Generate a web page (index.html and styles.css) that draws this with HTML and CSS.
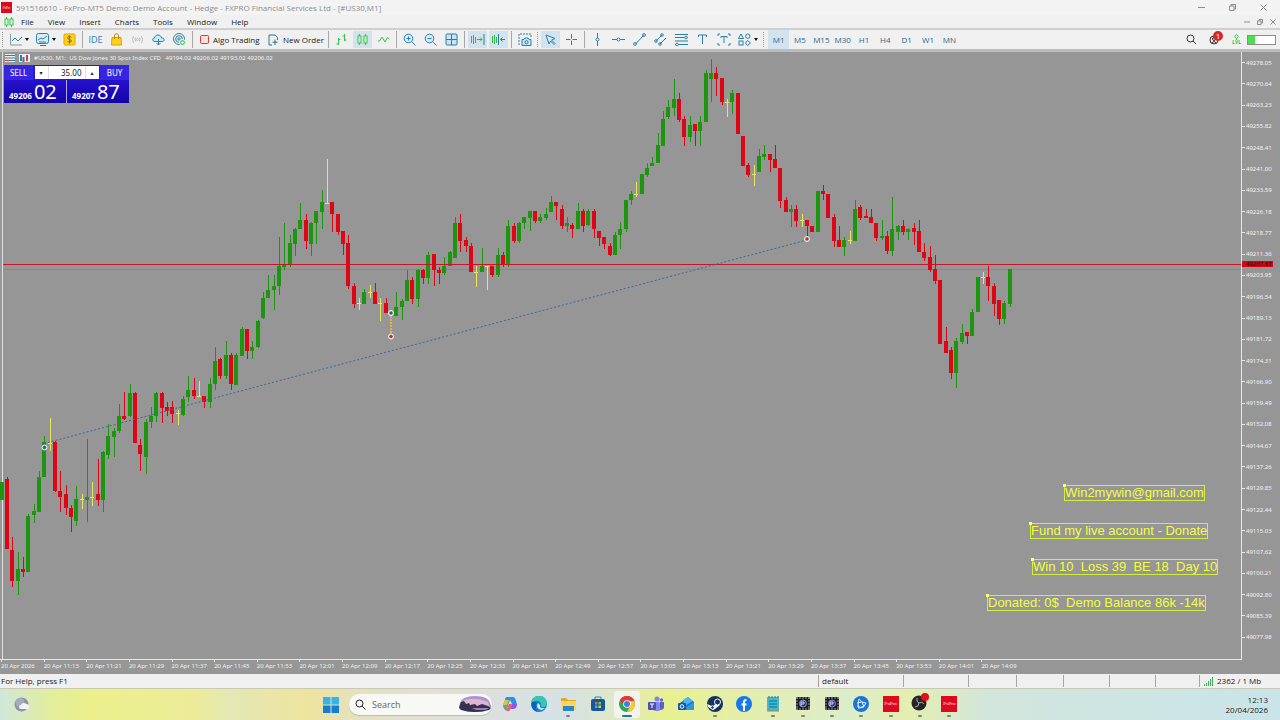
FILE: index.html
```html
<!DOCTYPE html>
<html lang="en">
<head>
    <meta charset="UTF-8">
    <meta name="viewport" content="width=device-width, initial-scale=1.0">
    <title>FxPro-MT5 Demo - [#US30,M1]</title>
    <link rel="stylesheet" href="styles.css">
</head>
<body>
    <header class="titlebar">
        <span class="fx-logo">FxPro</span>
        <h1>591516610 - FxPro-MT5 Demo: Demo Account - Hedge - FXPRO Financial Services Ltd - [#US30,M1]</h1>
        <div class="window-buttons">
            <button aria-label="Minimize"><svg width="7" height="7"><path d="M0 3.5h7"/></svg></button>
            <button aria-label="Restore"><svg width="7" height="7"><path d="M.5 2h4.500v4.500h-4.500zM2 2v-1.500h4.500v4.500h-1.500"/></svg></button>
            <button aria-label="Close"><svg width="7" height="7"><path d="M.5.5l6 6M6.500.5l-6 6"/></svg></button>
        </div>
    </header>

    <nav class="menubar">
        <svg class="menu-icon" width="10" height="10"><path d="M2.500 0v10M7.500 0v10"/><rect x="1" y="2" width="3" height="6"/><rect x="6" y="2" width="3" height="6"/></svg>
        <a href="#">File</a>
        <a href="#">View</a>
        <a href="#">Insert</a>
        <a href="#">Charts</a>
        <a href="#">Tools</a>
        <a href="#">Window</a>
        <a href="#">Help</a>
        <div class="window-buttons small">
            <button aria-label="Minimize chart"><svg width="6" height="6"><path d="M0 3h6"/></svg></button>
            <button aria-label="Restore chart"><svg width="6" height="6"><path d="M.5 2h3.500v3.500h-3.500zM2 2v-1.500h3.500v3.500h-1.500"/></svg></button>
            <button aria-label="Close chart"><svg width="6" height="6"><path d="M.5.5l5 5M5.500.5l-5 5"/></svg></button>
        </div>
    </nav>

    <div class="toolbar">
        <span class="grip"></span>
        <button class="tool drop" aria-label="Chart type"><svg width="13" height="13"><path d="M1.500 1v11H13" stroke="#8a979f"/><path d="M3 8l3-3 3 3 4-4"/></svg></button>
        <button class="tool drop" aria-label="Indicators"><svg width="13" height="13"><rect x=".5" y=".5" width="12" height="10" rx="2" fill="#d8edf6"/><path d="M2 7l3-2 2 1 4-3M4 12.500h6M3 9h7"/></svg></button>
        <button class="tool" aria-label="Symbols"><svg width="13" height="13"><rect x="1" y="1" width="11" height="11" rx="1" fill="#ffd21c" stroke="#dca800"/><path d="M8.500 4.500c-.5-1.500-4-1.500-4 .2 0 2 4 1.300 4 3.300 0 1.500-3.500 1.500-4 0M6.500 2.500v8" stroke="#8f6b00"/></svg></button>
        <span class="sep"></span>
        <button class="tool ide">IDE</button>
        <button class="tool" aria-label="Market"><svg width="13" height="13"><path d="M2 4.500h9l.5 7.500h-10z" fill="#ffcf1c" stroke="#d9a400"/><path d="M4.500 6V3c0-3 4-3 4 0v3" stroke="#b58900"/></svg></button>
        <button class="tool" aria-label="Signals"><svg width="13" height="13"><g stroke="#b9bcbe"><path d="M2.500 3q-2 3.500 0 7M4.500 4.500q-1 2 0 4M10.500 3q2 3.500 0 7M8.500 4.500q1 2 0 4"/><circle cx="6.500" cy="6.500" r="1"/></g></svg></button>
        <button class="tool" aria-label="Cloud"><svg width="13" height="13"><path d="M3 8.500c-3 0-3-3.500-.5-3.500.5-4 6.500-4 7 0 3.500 0 3.500 3.500.5 3.500z" fill="#cdeafa"/><path d="M6.500 6v6M4.500 10l2 2 2-2"/></svg></button>
        <button class="tool" aria-label="Network"><svg width="13" height="13"><circle cx="6" cy="6" r="5.500"/><circle cx="6" cy="6" r="3.300"/><circle cx="6" cy="6" r="1.200"/><circle cx="9.500" cy="9.500" r="3" fill="#4fce60" stroke="#fff"/><path d="M8 9.500h3M9.500 8v3" stroke="#fff"/></svg></button>
        <span class="sep"></span>
        <button class="tool text algo"><svg width="9" height="9"><rect x=".5" y=".5" width="8" height="8" rx="1" fill="#fbdcdc" stroke="#c9413f"/></svg>Algo Trading</button>
        <button class="tool text order"><svg width="11" height="12"><path d="M1 1h6l2.500 2.500V6M1 1v10h3" stroke="#28748e"/><path d="M7 5.500v5.500M4.500 8.200h5" stroke="#28748e"/></svg>New Order</button>
        <span class="sep"></span>
        <button class="tool green" aria-label="Bars"><svg width="13" height="13"><path d="M3.500 5v7M1.500 11h2M3.500 6.500h2M9.500 1v7M7.500 3h2M9.500 7h2"/></svg></button>
        <button class="tool green active" aria-label="Candles"><svg width="13" height="13"><path d="M3.500 1v11M9.500 1v11"/><rect x="2" y="3" width="3" height="7" fill="#dcf5df"/><rect x="8" y="3" width="3" height="7" fill="#dcf5df"/></svg></button>
        <button class="tool green" aria-label="Line"><svg width="13" height="13"><path d="M1 8h1.500l2.500-4 3 5 2.500-4.500 2 1.500"/></svg></button>
        <span class="sep"></span>
        <button class="tool" aria-label="Zoom in"><svg width="13" height="13"><circle cx="5.500" cy="5.500" r="4.300" fill="#d6ecf7"/><path d="M8.500 8.500l4 4M3.500 5.500h4M5.500 3.500v4"/></svg></button>
        <button class="tool" aria-label="Zoom out"><svg width="13" height="13"><circle cx="5.500" cy="5.500" r="4.300" fill="#d6ecf7"/><path d="M8.500 8.500l4 4M3.500 5.500h4"/></svg></button>
        <button class="tool" aria-label="Tile windows"><svg width="13" height="13"><rect x="1" y="1" width="11" height="11" rx="1" fill="#c7e5f4"/><path d="M6.500 1v11M1 6.500h11"/></svg></button>
        <span class="sep"></span>
        <button class="tool active" aria-label="Auto scroll"><svg width="15" height="13"><path d="M1.500 3v7M3.500 2v9M5.500 4v6M7 6.500h5M10 4.500l2 2-2 2" stroke="#3bb54a"/><path d="M14 1v11"/></svg></button>
        <button class="tool active" aria-label="Chart shift"><svg width="15" height="13"><path d="M1.500 3v7M3.500 2v9M5.500 4v6" stroke="#3bb54a"/><path d="M7.500 1v11M14 6.500H9.500M11.500 4.500l-2 2 2 2"/></svg></button>
        <span class="sep"></span>
        <button class="tool" aria-label="Screenshot"><svg width="14" height="13"><path d="M1 12V1h12v4" stroke-dasharray="2 1"/><path d="M4 6.500h2l1-1.500h3l1 1.500h2v6H4z" fill="#c7e5f4"/><circle cx="8.500" cy="9.200" r="1.600"/></svg></button>
        <span class="grip"></span>
        <button class="tool active" aria-label="Cursor"><svg width="13" height="13"><path d="M2 2l9 3.500-3.500 1.500 3.500 3.500-1 1-3.500-3.500L5 11z" fill="#d6ecf7"/></svg></button>
        <button class="tool" aria-label="Crosshair"><svg width="13" height="13"><path d="M6.500 1v4.500M6.500 7.500V12M1 6.500h4.500M7.500 6.500H12"/></svg></button>
        <span class="sep"></span>
        <button class="tool" aria-label="Vertical line"><svg width="13" height="13"><path d="M6.500 0v5M6.500 8v5"/><circle cx="6.500" cy="6.500" r="1.500"/></svg></button>
        <button class="tool" aria-label="Horizontal line"><svg width="13" height="13"><path d="M0 6.500h5M8 6.500h5"/><circle cx="6.500" cy="6.500" r="1.500"/></svg></button>
        <button class="tool" aria-label="Trendline"><svg width="13" height="13"><path d="M3 10.500l7.500-8"/><circle cx="2" cy="11" r="1.400"/><circle cx="11" cy="2" r="1.400"/></svg></button>
        <button class="tool" aria-label="Channel"><svg width="13" height="13"><path d="M2 8l6-6M6 11l6-6"/><circle cx="2" cy="8" r="1.300"/><circle cx="8" cy="2" r="1.300"/><circle cx="6" cy="11" r="1.300"/></svg></button>
        <button class="tool" aria-label="Fibonacci"><svg width="13" height="13"><path d="M0 1.500h13M0 4.500h13M0 8h13M0 11.500h13"/><circle cx="11" cy="4.500" r="1.300" fill="#fff"/><circle cx="2" cy="11.500" r="1.300" fill="#fff"/></svg></button>
        <button class="tool" aria-label="Text"><svg width="13" height="13"><path d="M2.500 4V2h8v2M6.500 2v9"/></svg></button>
        <button class="tool" aria-label="Text label"><svg width="14" height="13"><path d="M4 5V3.500h6V5M7 3.500V10M1 3V1h2M11 1h2v2M13 10v2h-2M3 12H1v-2"/></svg></button>
        <button class="tool drop" aria-label="Objects"><svg width="13" height="13"><path d="M3 1l2.500 4.500h-5zM9.500 7.500l3 2.500-3 2.500-2-2.500z"/><circle cx="9.800" cy="3.200" r="2.200"/><rect x="1" y="8" width="4" height="4"/></svg></button>
        <span class="grip"></span>
        <div class="timeframes">
            <button class="tf active">M1</button>
            <button class="tf">M5</button>
            <button class="tf">M15</button>
            <button class="tf">M30</button>
            <button class="tf">H1</button>
            <button class="tf">H4</button>
            <button class="tf">D1</button>
            <button class="tf">W1</button>
            <button class="tf">MN</button>
        </div>
        <div class="toolbar-end">
            <button class="tool dark" aria-label="Search"><svg width="11" height="11"><circle cx="4.500" cy="4.500" r="3.500"/><path d="M7 7l3 3"/></svg></button>
            <button class="tool dark" aria-label="Notifications"><svg width="11" height="11"><circle cx="5" cy="6" r="4"/><circle cx="5" cy="5" r="1.500"/><path d="M2.500 9q2.500-3 5 0"/></svg><span class="badge">1</span></button>
            <span class="level"><svg width="7" height="6"><path d="M3.500.5l2 2-2 2-2-2zM3.500 4v2"/></svg>LVL</span>
            <span class="meter"><span class="meter-fill"></span></span>
        </div>
    </div>

    <main class="chart">
        <div class="plot">
            <svg id="candles" class="candles" viewBox="0 52 1241 607" preserveAspectRatio="none">
                <path class="frame" d="M2.500 52V659"/>
                <path class="bid" d="M3 269.500H1241"/>
                <g id="bars"></g>
                <path class="ask" d="M3 264.500H1241"/>
                <path class="trade" d="M44 443.500L807 240"/>
                <path class="stop" d="M391 316V334"/>
                <g class="mark"><circle cx="44.500" cy="447.500" r="2.500"/><circle cx="44.500" cy="447.500" r="1" class="buy"/></g>
                <g class="mark"><circle cx="391" cy="313" r="2.500"/><circle cx="391" cy="313" r="1" class="buy"/></g>
                <g class="mark"><circle cx="391" cy="336.500" r="2.500"/><circle cx="391" cy="336.500" r="1" class="sell"/></g>
                <g class="mark"><circle cx="807" cy="239" r="2.500"/><circle cx="807" cy="239" r="1" class="sell"/></g>
            </svg>

            <div class="symbol">
                <svg width="10" height="8"><rect width="10" height="8" fill="#e9eef2"/><path d="M0 1.500h5M0 4h5M0 6.500h5" stroke="#c8434a"/><path d="M5 1.500h5M5 4h5M5 6.500h5" stroke="#2f7fa8"/></svg>
                <svg width="11" height="8"><rect width="11" height="8" fill="#e9eef2"/><path d="M2 1v6M4.500 3v5" stroke="#2f7fa8" stroke-width="2"/><path d="M8 1v6" stroke="#c8434a" stroke-width="2"/></svg>
                <span>#US30, M1:&nbsp; US Dow Jones 30 Spot Index CFD&nbsp;&nbsp; 49194.02 49206.02 49193.02 49206.02</span>
            </div>

            <form class="trade-panel">
                <div class="trade-top">
                    <button type="button" class="side">SELL</button>
                    <div class="lots">
                        <button type="button" aria-label="Less">&#9662;</button>
                        <input type="text" value="35.00" aria-label="Volume">
                        <button type="button" aria-label="More">&#9652;</button>
                    </div>
                    <button type="button" class="side">BUY</button>
                </div>
                <div class="trade-prices">
                    <p class="price"><small>49206</small><b>02</b></p>
                    <p class="price"><small>49207</small><b>87</b></p>
                </div>
            </form>

            <p class="note note-mail">Win2mywin@gmail.com</p>
            <p class="note note-fund">Fund my live account - Donate</p>
            <p class="note note-score">Win 10&nbsp; Loss 39&nbsp; BE 18&nbsp; Day 10</p>
            <p class="note note-balance">Donated: 0$&nbsp; Demo Balance 86k -14k</p>
        </div>
        <div class="prices">
            <div id="prices" class="price-list"></div>
            <span class="ask-label">49207.87</span>
        </div>
        <div id="times" class="times"></div>
    </main>

    <footer class="status">
        <span>For Help, press F1</span>
        <span>default</span>
        <span></span>
        <span></span>
        <span></span>
        <span></span>
        <span></span>
        <span></span>
        <span class="traffic"><svg width="11" height="9"><path d="M1.500 7v2M3.500 6v3M5.500 4v5M7.500 2v7M9.500 0v9"/></svg>2362 / 1 Mb</span>
    </footer>

    <div class="taskbar">
        <button class="weather" aria-label="Weather"><svg width="15" height="15"><circle cx="7.500" cy="7.500" r="7" fill="#8b95a5"/><circle cx="6" cy="5.500" r="4.500" fill="#a3adb9"/><path d="M7 12a2 2 0 010-4 3 3 0 015-1 2.500 2.500 0 011 5z" fill="#f2f4f7"/></svg></button>
        <div class="dock">
            <button class="start" aria-label="Start"><svg width="16" height="16"><path d="M0 0h7.500v7.500H0zM8.500 0H16v7.500H8.500z" fill="#36b4ea"/><path d="M0 8.500h7.500V16H0zM8.500 8.500H16V16H8.500z" fill="#117fd3"/></svg></button>
            <label class="search">
                <svg width="11" height="11"><circle cx="4.500" cy="4.500" r="3.500"/><path d="M7 7l3.500 3.500"/></svg>
                <input type="text" placeholder="Search">
                <svg class="scene" width="34" height="17" viewBox="0 0 34 17"><path d="M2 7Q4 0 17 0q13 0 15 7l1 3q-1 6-16 6Q2 16 1 10z" fill="#a893cf"/><path d="M4 5q12-5 26 1l1 4H4z" fill="#dcb7cf"/><path d="M1 12l2-6 3-1 2 3 3-1 1 2 5-1 2 2 5-2 6 2 3 2-2 2q-14 4-28 0z" fill="#37304f"/><path d="M14 12h17l-3 2H18z" fill="#8c84b4"/></svg>
            </label>
            <div class="apps">
                <button aria-label="Copilot"><svg width="16" height="16"><path d="M5 1h6q2 0 3 4l1 3h-5L8 4H3q0-3 2-3z" fill="#2593e8"/><path d="M3 4h5L5 13Q1 14 1 9z" fill="#34b8a0"/><path d="M3 4h4L5 9H1z" fill="#f5b63e"/><path d="M15 8H10l-2 5h3q4 0 4-5z" fill="#8f57dc"/><path d="M5 13l2-5h3l-2 6-1 1H5q-2 0-3-3z" fill="#ed5c70"/></svg></button>
                <button aria-label="Edge"><svg width="16" height="16"><circle cx="8" cy="8" r="8" fill="#1683d2"/><path d="M0 8A8 8 0 0116 7q0 4-4 4-3 0-2-2c1-5-7-6-10-1z" fill="#39c5b0"/><path d="M1 6q-2 8 6 10Q3 12 6 7 3 5 1 6z" fill="#0f63b2"/><path d="M7 7q-3 5 3 7 2 0 4-2-6 1-5-3z" fill="#d9ecf4"/></svg></button>
                <button class="running" aria-label="File Explorer"><svg width="17" height="16"><path d="M1 2h5l2 2h8v10H1z" fill="#e4a921"/><path d="M1 5h15v9H1z" fill="#ffd55c"/><path d="M3 10h11v5H3z" fill="#2586d2"/></svg></button>
                <button aria-label="Store"><svg width="16" height="16"><path d="M5 4V1h6v3" fill="none" stroke="#2a83c4"/><rect x="1" y="3" width="14" height="12" rx="2" fill="#155a98"/><path d="M5 6h2.500v2.500H5z" fill="#f25f45"/><path d="M8.500 6H11v2.500H8.500z" fill="#87c441"/><path d="M5 9.500h2.500V12H5z" fill="#36b0ee"/><path d="M8.500 9.500H11V12H8.500z" fill="#fbc23c"/></svg></button>
                <button class="current" aria-label="Chrome"><svg width="16" height="16"><circle cx="8" cy="8" r="8" fill="#2fa451"/><path d="M1 4a8 8 0 0114 0l.5 1.500H8L4.500 9z" fill="#e23b31"/><path d="M15.300 5A8 8 0 018 16l3.500-6.500L10 5z" fill="#fccb2b"/><circle cx="8" cy="8" r="3.800" fill="#fff"/><circle cx="8" cy="8" r="3" fill="#397fe8"/></svg></button>
                <button aria-label="Teams"><svg width="16" height="16"><circle cx="9" cy="3" r="2.500" fill="#7c83ea"/><circle cx="13.500" cy="4" r="1.700" fill="#6067c9"/><rect x="5" y="6" width="8" height="9" rx="3" fill="#8388ee"/><path d="M12 6h4v5q0 3-4 3z" fill="#5b61c9"/><rect x="0" y="6" width="8" height="8" rx="1" fill="#4c4fb6"/><path d="M2 8h4M4 8v4" stroke="#fff"/></svg></button>
                <button aria-label="Outlook"><svg width="16" height="16"><path d="M2 7l8-6 6 5v8H2z" fill="#1a6fc4"/><path d="M5 4l5-3 5 4-8 5z" fill="#4fb2ee"/><path d="M3 10l5 1 8-5v8H3z" fill="#2d97e6"/><rect x="0" y="7" width="8" height="7" rx="1" fill="#1258a5"/><circle cx="4" cy="10.500" r="1.800" fill="none" stroke="#fff"/></svg></button>
                <button class="running" aria-label="Steam"><svg width="16" height="16"><circle cx="8" cy="8" r="8" fill="#14325c"/><path d="M0 8l6 2.500L9 7l4 2-5 4-2 1-5-3z" fill="#f2f5f8"/><circle cx="10.500" cy="6" r="3" fill="#14325c" stroke="#f2f5f8"/><circle cx="5.500" cy="11.500" r="1.700" fill="#14325c" stroke="#f2f5f8"/></svg></button>
                <button aria-label="Facebook"><svg width="16" height="16"><circle cx="8" cy="8" r="8" fill="#1778e8"/><path d="M8 15V6q0-2 2.500-2M5.500 8.500h5" fill="none" stroke="#fff" stroke-width="2"/></svg></button>
                <button class="running" aria-label="Notepad"><svg width="14" height="16"><rect x="1" y="1" width="12" height="14" rx="1" fill="#3fb9d0"/><path d="M3 5h8M3 8h8M3 11h8" stroke="#146f93"/><path d="M3 0v2M6 0v2M9 0v2M12 0v2" stroke="#3f6470"/><path d="M1 15h12" stroke="#c97832"/></svg></button>
                <button class="running" aria-label="MT terminal one"><svg width="16" height="15"><rect x="1" y="1" width="14" height="13" fill="#171b34"/><path d="M1 2h14M1 13h14M2 1v13M14 1v13" stroke="#b79358" stroke-dasharray="2 1"/><circle cx="8" cy="7.500" r="3.500" fill="#25376c" stroke="#7f97d8"/><path d="M6 10V6h3v2H6" fill="none" stroke="#d4dbf0"/></svg></button>
                <button class="running" aria-label="MT terminal two"><svg width="16" height="15"><rect x="1" y="1" width="14" height="13" fill="#171b34"/><path d="M1 2h14M1 13h14M2 1v13M14 1v13" stroke="#b79358" stroke-dasharray="2 1"/><circle cx="8" cy="7.500" r="3.500" fill="#25376c" stroke="#7f97d8"/><path d="M6 10V6h3v2H6" fill="none" stroke="#d4dbf0"/></svg></button>
                <button class="running" aria-label="Battle.net"><svg width="16" height="16"><circle cx="8" cy="8" r="8" fill="#1976d6"/><g fill="none" stroke="#e2f3ff"><path d="M6 3q4 3 5 8-4 1-7-1M6 3q-2 5 0 10M4 7q5-2 9 0-1 4-6 5"/></g></svg></button>
                <button class="running" aria-label="FxPro terminal"><span class="fx-logo big">FxPro</span></button>
                <button class="running obs" aria-label="OBS Studio"><svg width="18" height="18"><circle cx="8" cy="10" r="7.500" fill="#24242a"/><path d="M8 10Q5 9 6 5M8 10q3-2 5 1M8 10q0 4-4 4" fill="none" stroke="#a9a9ad"/><circle cx="14" cy="4" r="4" fill="#e60d14"/></svg></button>
                <button class="running" aria-label="FxPro terminal two"><span class="fx-logo big">FxPro</span></button>
            </div>
        </div>
        <div class="clock"><time>12:13</time><time>20/04/2026</time></div>
    </div>

    <script src="script.js"></script>
</body>
</html>
```
FILE: styles.css
```css
* {
    box-sizing: border-box;
}

body {
    display: flex;
    flex-direction: column;
    height: 100vh;
    margin: 0;
    overflow: hidden;
    background-color: #f0f0f0;
    color: #1a1a1a;
    font-family: "Open Sans", "Noto Sans", sans-serif;
    font-size: 8px;
    line-height: 12px;
}

button,
input {
    margin: 0;
    padding: 0;
    border: none;
    background: none;
    color: inherit;
    font: inherit;
}

p {
    margin: 0;
}

svg {
    display: block;
    flex: none;
}

/* title and menu */
.titlebar {
    display: flex;
    align-items: center;
    height: 15px;
    padding-left: 1px;
    background-color: #f3f3f3;
    color: #8c8c8c;
}

.titlebar h1 {
    margin: 0 0 0 4px;
    font-size: 8px;
    font-weight: normal;
    white-space: nowrap;
}

.fx-logo {
    display: flex;
    align-items: center;
    justify-content: center;
    width: 11px;
    height: 11px;
    background-color: #e0081c;
    color: #fff;
    font-family: "Liberation Serif", serif;
    font-size: 3px;
    line-height: 4px;
}

.fx-logo.big {
    width: 16px;
    height: 16px;
    font-size: 5px;
}

.window-buttons {
    display: flex;
    gap: 24px;
    margin-left: auto;
    padding-right: 13px;
}

.window-buttons svg {
    fill: none;
    stroke: #8c8c8c;
}

.window-buttons.small {
    gap: 7px;
    padding-right: 4px;
}

.menubar {
    display: flex;
    align-items: center;
    height: 13px;
    padding-left: 4px;
}

.menubar a {
    margin-right: 14px;
    color: #1a1a1a;
    text-decoration: none;
}

.menu-icon {
    margin-right: 7px;
    fill: #e6f7e8;
    stroke: #3cc64c;
}

/* toolbar */
.toolbar {
    display: flex;
    align-items: stretch;
    height: 21px;
    border-top: 2px solid #cfcfcf;
    background-color: #f0f0f0;
}

.tool {
    display: flex;
    flex: none;
    align-items: center;
    justify-content: center;
    width: 21px;
    position: relative;
}

.tool svg {
    fill: none;
    stroke: #2a7fae;
}

.tool.green svg {
    stroke: #3bc04c;
}

.tool.dark svg {
    stroke: #333;
}

.tool.active,
.tf.active {
    background-color: #d3e3ee;
}

.tool.active {
    border: 1px solid #f0f0f0;
}

.tool.drop {
    width: 27px;
    gap: 3px;
}

.tool.drop::after {
    content: "";
    border: 2px solid transparent;
    border-top: 3px solid #111;
    border-bottom: none;
}

.tool.ide {
    color: #2a7fae;
    font-size: 9px;
}

.tool.text {
    justify-content: flex-start;
    gap: 4px;
    padding-left: 5px;
    white-space: nowrap;
}

.tool.algo {
    width: 73px;
}

.tool.order {
    width: 58px;
    padding-left: 0;
}

.sep {
    flex: none;
    width: 1px;
    margin: 1px 2px;
    background-color: #a8a8a8;
}

.grip {
    flex: none;
    width: 1px;
    margin: 2px 2px;
    border-left: 1px dotted #999;
}

.timeframes {
    display: grid;
    grid-template-columns: repeat(9, 1fr);
    flex: none;
    width: 192px;
    margin-left: 2px;
}

.tf {
    color: #28678c;
}

.toolbar-end {
    display: flex;
    align-items: center;
    gap: 2px;
    margin-left: auto;
    padding-right: 4px;
}

.badge {
    position: absolute;
    top: -3px;
    right: 2px;
    width: 10px;
    height: 10px;
    border-radius: 50%;
    background-color: #d9262c;
    color: #fff;
    line-height: 10px;
    text-align: center;
}

.level {
    display: flex;
    flex-direction: column;
    align-items: center;
    margin: 0 4px 0 5px;
    color: #2fbf4a;
    font-size: 5px;
    font-weight: bold;
    line-height: 5px;
}

.level svg {
    fill: none;
    stroke: #2fbf4a;
}

.meter {
    width: 29px;
    height: 10px;
    border: 1px solid #8c8c8c;
    background-color: #fff;
}

.meter-fill {
    display: block;
    width: 25%;
    height: 100%;
    background-color: #4be04e;
}

/* chart */
.chart {
    display: grid;
    grid-template-columns: 1fr 38px;
    grid-template-rows: 1fr 14px;
    flex: 1;
    min-height: 0;
    border-top: 3px solid #bcbcbc;
    background-color: #969696;
    color: #f2f2f2;
    font-family: "Noto Sans", sans-serif;
    font-size: 6px;
    line-height: 8px;
}

.plot {
    position: relative;
    min-height: 0;
    border-right: 1px solid #e6e6e6;
    border-bottom: 1px solid #e6e6e6;
}

.candles {
    position: absolute;
    width: 100%;
    height: 100%;
    fill: none;
}

.frame {
    stroke: #e0e0e0;
}

.ask {
    stroke: #c81428;
}

.bid {
    stroke: #7f8b98;
}

.trade {
    stroke: #3b6896;
    stroke-dasharray: 2 2;
}

.stop {
    stroke: #e8b040;
    stroke-width: 2;
    stroke-dasharray: 2 1;
}

.mark {
    fill: #969696;
    stroke: #f4f4f4;
}

.mark .buy {
    fill: #1d5f9c;
    stroke: #1d5f9c;
}

.mark .sell {
    fill: #d02020;
    stroke: #d02020;
}

.up {
    fill: #1c960e;
}

.down {
    fill: #dc0614;
}

.doji {
    fill: #e8e65a;
}

.symbol {
    display: flex;
    position: relative;
    align-items: center;
    gap: 4px;
    padding: 2px 0 0 5px;
    white-space: nowrap;
}

.trade-panel {
    position: absolute;
    top: 13px;
    left: 4px;
    width: 125px;
    background-color: #2a18d8;
    color: #fff;
}

.trade-top {
    display: flex;
    justify-content: space-between;
    height: 15px;
}

.side {
    width: 29px;
    background-color: #3626e0;
    font-size: 8px;
}

.lots {
    display: flex;
    width: 64px;
    height: 13px;
    margin-top: 1px;
    background-color: #fff;
    color: #222;
}

.lots button {
    width: 13px;
    font-family: "DejaVu Sans", sans-serif;
    font-size: 6px;
}

.lots input {
    width: 38px;
    padding-right: 3px;
    border: 1px solid #ddd;
    border-width: 0 1px;
    font-size: 8px;
    text-align: right;
}

.trade-prices {
    display: flex;
    gap: 1px;
    background-color: #a8a8e8;
}

.price {
    display: flex;
    flex: 1;
    align-items: flex-end;
    gap: 2px;
    height: 23px;
    padding-left: 5px;
    background-image: linear-gradient(#2412d0, #1404a4);
}

.price small {
    font-size: 8px;
    font-weight: bold;
    line-height: 14px;
}

.price b {
    font-size: 20px;
    font-weight: normal;
    line-height: 23px;
}

.note {
    position: absolute;
    border: 1px solid #d2ee3c;
    color: #f0ff3c;
    font-family: "Liberation Sans", sans-serif;
    font-size: 13px;
    line-height: 14px;
    white-space: nowrap;
}

.note::before {
    content: "";
    position: absolute;
    top: -2px;
    left: -2px;
    width: 3px;
    height: 3px;
    background-color: #f6ff80;
}

.note-mail {
    top: 433px;
    left: 1064px;
}

.note-fund {
    top: 471px;
    left: 1030px;
}

.note-score {
    top: 507px;
    left: 1032px;
}

.note-balance {
    top: 543px;
    left: 987px;
}

.prices {
    position: relative;
    min-height: 0;
}

.price-list {
    display: flex;
    flex-direction: column;
    height: 100%;
    padding-bottom: 12px;
}

.price-list span {
    display: flex;
    flex: 1;
    align-items: center;
    gap: 1px;
}

.price-list span::before {
    content: "";
    width: 3px;
    height: 1px;
    background-color: #e6e6e6;
}

.ask-label {
    position: absolute;
    top: 209px;
    left: 0;
    width: 31px;
    height: 6px;
    padding-left: 4px;
    background-color: #d00818;
    color: #300;
    line-height: 6px;
}

.times {
    display: grid;
    grid-template-columns: repeat(24, 1fr);
    grid-column: 1 / 3;
    width: 80%;
    padding-left: 1px;
}

.times span {
    position: relative;
    padding-top: 2px;
    white-space: nowrap;
}

.times span::before {
    content: "";
    position: absolute;
    top: 0;
    left: 0;
    width: 1px;
    height: 2px;
    background-color: #e6e6e6;
}

/* status bar */
.status {
    display: grid;
    grid-template-columns: 1fr 85px 65px 48px 47px 46px 46px 44px 81px;
    height: 15px;
    padding: 1px 0;
    border-bottom: 1px solid #c9c9b4;
}

.status span {
    padding-left: 3px;
    border-left: 1px solid #a5a5a5;
}

.status span:first-child {
    padding-left: 1px;
    border-left: none;
}

.status .traffic {
    display: flex;
    align-items: center;
    gap: 3px;
}

.traffic svg {
    stroke: #3fae58;
}

/* taskbar */
.taskbar {
    display: grid;
    grid-template-columns: 1fr auto 1fr;
    align-items: center;
    height: 31px;
    background-image: linear-gradient(90deg, #cfe7da 0%, #e3ee9c 4%, #ebf08c 7%, #ecec98 15%, #e4e8b4 18%, #eee49e 24%, #e6e2b8 27%, #e2dfd8 33%, #d5e2e6 44%, #dfe8c8 48%, #e8f090 52%, #e2eeb4 60%, #dcedcc 66%, #e4eeb0 71%, #d2e6dc 77%, #c9e4ea 100%);
}

.weather {
    justify-self: start;
    padding-left: 14px;
}

.dock {
    display: flex;
    align-items: center;
    gap: 3px;
}

.start {
    display: flex;
    justify-content: center;
    width: 30px;
}

.search {
    display: flex;
    align-items: center;
    gap: 6px;
    width: 143px;
    height: 21px;
    padding-left: 6px;
    border-radius: 10px;
    background-color: #f8f8f4;
    box-shadow: 0 1px 1px #bdbdb0;
}

.search svg {
    fill: none;
    stroke: #222;
}

.search .scene {
    stroke: none;
}

.search input {
    flex: 1;
    min-width: 0;
    font-size: 9px;
}

.search input::placeholder {
    color: #666;
}

.apps {
    display: grid;
    grid-template-columns: repeat(16, 1fr);
    width: 469px;
}

.apps button {
    display: flex;
    position: relative;
    align-items: center;
    justify-content: center;
    height: 27px;
    padding-bottom: 2px;
}

.apps .running::after,
.apps .current::after {
    content: "";
    position: absolute;
    bottom: 1px;
    width: 4px;
    height: 2px;
    border-radius: 1px;
    background-color: #7c8270;
}

.apps .current {
    margin: 0 2px;
    border-radius: 3px;
    background-color: #f2f3ee;
}

.apps .current::after {
    width: 10px;
    background-color: #1673bd;
}

.apps .obs {
    padding-bottom: 5px;
}

.clock {
    display: flex;
    flex-direction: column;
    align-items: flex-end;
    justify-self: end;
    padding-right: 12px;
    line-height: 10px;
}
```
FILE: script.js
```js
// type, high, body top, body bottom, low (g = up, r = down, y = doji)
const candles = `
g 482 482 500 500|r 477 479 549 549|r 537 550 581 587|g 552 569 581 595|r 557 569 572 577
g 514 516 572 572|g 504 511 515 523|g 471 477 512 512|g 436 442 477 477|y 418 443 444 451
r 441 442 491 492|r 471 491 497 512|r 485 494 508 515|r 505 508 517 532|g 486 499 521 526
y 494 499 500 509|g 439 497 500 522|y 482 497 498 506|r 459 494 500 506|g 451 452 500 512
g 424 436 455 459|g 428 431 437 457|g 404 416 431 433|r 392 416 419 420|g 384 393 416 417
r 392 393 443 443|r 439 445 454 471|g 419 422 457 474|g 407 416 422 428|g 392 393 416 422
r 392 393 408 423|r 402 407 411 416|r 401 407 414 423|y 410 413 414 425|g 396 399 415 416
g 376 390 397 402|r 378 390 396 399|y 381 396 397 397|r 396 396 402 408|g 378 384 402 408
g 347 361 384 390|r 358 359 376 379|g 341 355 376 379|r 353 355 384 390|g 353 355 385 385
g 327 329 356 356|r 329 329 351 359|g 341 347 351 359|g 320 321 347 348|g 292 298 318 319
g 275 290 298 298|g 275 286 290 310|g 237 266 286 295|g 223 264 267 270|g 235 243 264 267
g 228 229 244 256|g 203 220 229 229|r 214 220 241 249|g 222 223 244 256|g 211 211 223 244
g 190 202 212 229|y 159 203 204 204|r 202 202 214 232|r 214 214 232 235|r 231 231 244 255
r 235 243 286 289|r 283 286 304 308|y 298 303 304 310|g 289 292 304 304|y 285 292 293 298
r 283 292 304 304|y 298 303 304 321|r 298 303 313 313|r 311 313 314 316|g 292 307 316 316
g 299 301 307 320|g 270 280 301 301|r 277 280 299 304|g 269 270 299 307|r 269 270 278 284
g 252 255 278 284|r 254 254 270 286|r 267 270 273 284|g 257 266 273 275|g 251 252 266 266
g 217 223 258 258|r 214 223 241 252|r 237 240 246 252|r 243 246 272 272|y 266 272 273 287
g 248 266 272 272|y 266 266 267 290|r 266 266 275 277|g 248 255 275 277|r 252 255 264 267
g 220 226 264 267|r 223 226 241 243|g 222 223 241 243|g 217 217 223 229|g 211 211 218 231
r 211 211 221 223|g 214 217 221 223|g 208 214 218 220|g 196 202 212 212|r 202 202 206 220
r 205 209 226 229|g 217 223 226 232|r 223 225 229 238|g 203 211 229 229|r 209 211 226 232
g 209 211 225 226|r 209 211 229 238|r 231 231 238 246|r 237 237 244 249|r 243 246 255 256
g 232 235 255 255|g 222 229 235 249|g 200 200 229 232|g 191 194 200 205|y 182 194 195 197
g 174 174 194 194|g 163 168 175 177|g 157 163 166 166|g 133 145 163 163|g 111 119 146 146
g 100 107 117 119|g 79 99 108 116|r 93 99 120 122|r 116 119 137 146|g 116 125 137 142
r 124 124 131 146|g 116 122 131 146|g 70 73 122 122|g 59 73 79 102|r 67 73 79 96
r 78 78 102 105|y 99 102 103 117|g 90 93 102 114|r 93 93 134 134|r 136 136 166 166
r 163 165 175 177|y 165 174 175 186|g 149 156 172 172|g 145 154 157 160|r 154 154 160 172
r 145 159 168 168|r 168 168 201 208|r 197 200 212 212|g 205 209 212 227|r 205 209 221 227
y 214 220 221 227|r 220 220 226 238|r 226 226 232 232|g 191 191 232 232|r 185 191 194 200
r 194 194 218 218|r 214 217 241 247|r 226 240 247 247|g 237 240 247 256|y 231 240 241 244
g 200 209 241 241|r 205 207 218 220|r 209 216 218 218|r 209 217 223 223|r 223 223 238 241
g 220 236 238 240|r 231 236 251 254|g 197 229 251 256|g 225 226 232 240|r 220 226 232 235
g 228 229 232 240|r 223 228 232 245|r 220 231 252 252|r 243 252 258 261|r 246 257 270 272
r 255 269 281 284|r 280 280 344 344|r 327 341 353 353|r 347 350 373 379|g 338 341 373 388
g 324 333 342 344|r 332 332 336 344|g 309 312 336 336|g 277 277 312 312|y 272 277 278 284
r 266 277 286 301|r 283 286 304 316|r 300 300 319 325|g 301 303 319 324|g 269 269 304 307
`.trim().split(/[|\n]/);

const names = { g: 'up', r: 'down', y: 'doji' };
const bars = document.getElementById('bars');

function addRect(name, x, y, width, height) {
    const rect = document.createElementNS('http://www.w3.org/2000/svg', 'rect');
    rect.setAttribute('class', name);
    rect.setAttribute('x', x);
    rect.setAttribute('y', y);
    rect.setAttribute('width', width);
    rect.setAttribute('height', Math.max(height, 1));
    bars.appendChild(rect);
}

candles.forEach((row, i) => {
    const [type, high, top, bottom, low] = row.split(' ');
    const x = Math.round(1.5 + i * 16 / 3);
    addRect(names[type], x, high, 1, low - high);
    addRect(names[type], x - 2, top, 4, bottom - top);
});

function addLabel(parent, text) {
    const span = document.createElement('span');
    span.textContent = text;
    parent.appendChild(span);
}

const prices = document.getElementById('prices');
for (let i = 0; i < 28; i++) {
    addLabel(prices, (49278.05 - i * 7.41).toFixed(2));
}

const times = document.getElementById('times');
addLabel(times, '20 Apr 2026');
for (let i = 0; i < 23; i++) {
    const minutes = 11 * 60 + 13 + i * 8;
    const hour = Math.floor(minutes / 60);
    addLabel(times, '20 Apr ' + hour + ':' + String(minutes % 60).padStart(2, '0'));
}
```
